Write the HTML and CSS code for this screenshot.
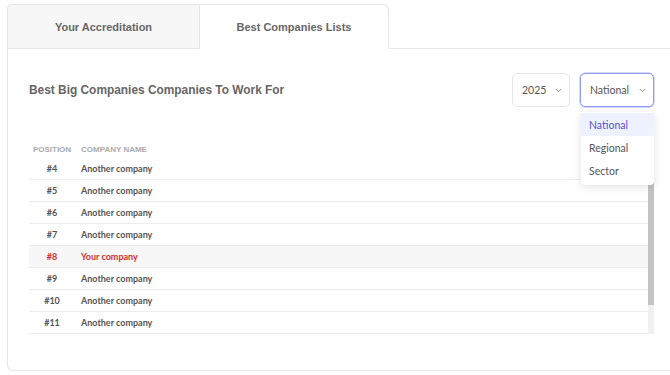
FILE: index.html
```html
<!DOCTYPE html>
<html lang="en">
<head>
<meta charset="utf-8">
<title>Best Companies Lists</title>
<link rel="stylesheet" href="styles.css">
</head>
<body>
<div class="card">
  <div class="tabs">
    <div class="tab">Your Accreditation</div>
    <div class="tab active">Best Companies Lists</div>
    <div class="tab-fill"></div>
  </div>
  <div class="panel">
    <div class="panel-head">
      <h2 class="title">Best Big Companies Companies To Work For</h2>
      <div class="filters">
        <div class="select year">
          <span>2025</span>
          <svg class="chev" width="7" height="5" viewBox="0 0 7 5"><polyline points="0.8,1 3.5,3.8 6.2,1" fill="none" stroke="#8a8a8a" stroke-width="1"/></svg>
        </div>
        <div class="select-wrap">
          <div class="select scope focused">
            <span>National</span>
            <svg class="chev" width="7" height="5" viewBox="0 0 7 5"><polyline points="0.8,1 3.5,3.8 6.2,1" fill="none" stroke="#8a8a8a" stroke-width="1"/></svg>
          </div>
          <ul class="menu">
            <li class="menu-item selected">National</li>
            <li class="menu-item">Regional</li>
            <li class="menu-item">Sector</li>
          </ul>
        </div>
      </div>
    </div>
    <div class="list-wrap">
      <div class="list">
        <div class="row head"><div class="pos">Position</div><div class="name">Company name</div></div>
        <div class="row"><div class="pos">#4</div><div class="name">Another company</div></div>
        <div class="row"><div class="pos">#5</div><div class="name">Another company</div></div>
        <div class="row"><div class="pos">#6</div><div class="name">Another company</div></div>
        <div class="row"><div class="pos">#7</div><div class="name">Another company</div></div>
        <div class="row mine"><div class="pos">#8</div><div class="name">Your company</div></div>
        <div class="row"><div class="pos">#9</div><div class="name">Another company</div></div>
        <div class="row"><div class="pos">#10</div><div class="name">Another company</div></div>
        <div class="row"><div class="pos">#11</div><div class="name">Another company</div></div>
      </div>
      <div class="scrollbar"><div class="thumb"></div></div>
    </div>
  </div>
</div>
</body>
</html>
```
FILE: styles.css
```css
html, body {
  margin: 0;
  padding: 0;
  background: #ffffff;
  overflow: hidden;
}
body {
  font-family: "Liberation Sans", Arial, sans-serif;
}
.card {
  padding: 4px 0 0 7px;
}
.tabs {
  display: flex;
  height: 45px;
}
.tab {
  box-sizing: border-box;
  height: 45px;
  display: flex;
  align-items: center;
  justify-content: center;
  font-weight: bold;
  font-size: 11px;
  color: #666666;
  border: 1px solid #e6e6e6;
}
.tab:first-child {
  width: 192px;
  background: #f7f7f7;
  border-right: none;
  border-radius: 5px 0 0 0;
}
.tab.active {
  width: 190px;
  background: #ffffff;
  border-bottom-color: #ffffff;
  border-radius: 0 6px 0 0;
}
.tab-fill {
  flex: 1;
  border-bottom: 1px solid #e6e6e6;
}
.panel {
  box-sizing: border-box;
  height: 322px;
  border-left: 1px solid #e6e6e6;
  border-bottom: 1px solid #e6e6e6;
  border-radius: 0 0 0 6px;
  padding: 24px 16px 0 21px;
}
.panel-head {
  display: flex;
  align-items: center;
  justify-content: space-between;
}
.title {
  margin: 0;
  font-size: 11.9px;
  font-weight: bold;
  color: #666666;
}
.filters {
  display: flex;
  gap: 10px;
}
.select {
  box-sizing: border-box;
  height: 34px;
  border: 1px solid #e5e7eb;
  border-radius: 5px;
  display: flex;
  align-items: center;
  justify-content: space-between;
  padding: 0 7px 0 9px;
  font-family: Lato, "Noto Sans", sans-serif;
  font-size: 10.5px;
  color: #555555;
}
.year { width: 58px; }
.scope { width: 74px; }
.focused {
  border-color: #8e9cf2;
  box-shadow: 0 0 0 0.5px #a9b4f6;
}
.select-wrap {
  position: relative;
}
.menu {
  position: absolute;
  top: 39px;
  left: 1px;
  width: 73px;
  margin: 0;
  padding: 1px 0 3px;
  list-style: none;
  background: #ffffff;
  border-radius: 4px;
  box-shadow: 0 2px 8px rgba(0, 0, 0, 0.12);
  z-index: 5;
}
.menu-item {
  height: 23px;
  display: flex;
  align-items: center;
  padding-left: 8px;
  font-family: Lato, "Noto Sans", sans-serif;
  font-size: 10.5px;
  color: #555555;
}
.menu-item.selected {
  background: #eef2ff;
  color: #5a4fd3;
}
.list-wrap {
  margin-top: 33px;
  height: 194px;
  display: flex;
}
.list {
  flex: 1;
  font-family: Lato, "Noto Sans", sans-serif;
}
.scrollbar {
  width: 6px;
  background: #f1f1f1;
}
.thumb {
  height: 165px;
  background: #c3c3c3;
}
.row {
  display: flex;
  align-items: center;
  height: 21px;
  border-bottom: 1px solid #ececec;
  font-size: 9px;
  font-weight: bold;
  color: #555555;
}
.row.head {
  height: 18px;
  border-bottom: none;
  font-family: "Liberation Sans", Arial, sans-serif;
  font-size: 8px;
  font-weight: bold;
  color: #ababab;
  text-transform: uppercase;
}
.pos {
  width: 46px;
  text-align: center;
}
.name {
  padding-left: 6px;
}
.row.mine {
  background: #f7f7f7;
  color: #d8312b;
}
```
